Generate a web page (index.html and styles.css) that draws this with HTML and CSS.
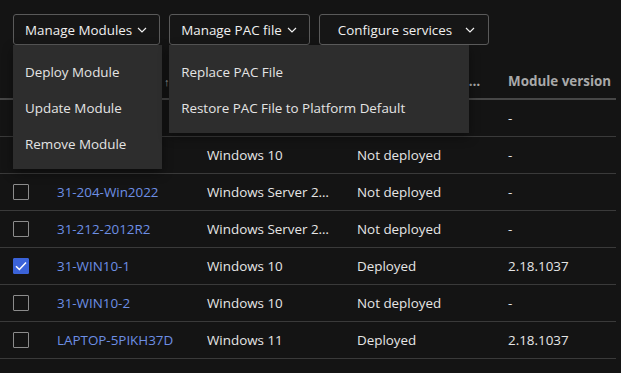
FILE: index.html
```html
<!DOCTYPE html>
<html>
<head>
  <title>Devices - Modules</title>
  <link rel="stylesheet" href="styles.css">
</head>
<body>
  <div class="toolbar">
    <div class="menu">
      <button type="button" class="menu-button">Manage Modules
        <svg class="chevron" width="10" height="6" viewBox="0 0 10 6"><path d="M1 1l4 4 4-4" fill="none" stroke="currentColor" stroke-width="1.2"/></svg>
      </button>
      <div class="dropdown dropdown-modules">
        <div class="dropdown-item">Deploy Module</div>
        <div class="dropdown-item">Update Module</div>
        <div class="dropdown-item">Remove Module</div>
      </div>
    </div>
    <div class="menu">
      <button type="button" class="menu-button">Manage PAC file
        <svg class="chevron" width="10" height="6" viewBox="0 0 10 6"><path d="M1 1l4 4 4-4" fill="none" stroke="currentColor" stroke-width="1.2"/></svg>
      </button>
      <div class="dropdown dropdown-pac">
        <div class="dropdown-item">Replace PAC File</div>
        <div class="dropdown-item">Restore PAC File to Platform Default</div>
      </div>
    </div>
    <div class="menu">
      <button type="button" class="menu-button menu-button-wide">Configure services
        <svg class="chevron" width="10" height="6" viewBox="0 0 10 6"><path d="M1 1l4 4 4-4" fill="none" stroke="currentColor" stroke-width="1.2"/></svg>
      </button>
    </div>
  </div>

  <table class="device-table">
    <colgroup>
      <col class="col-check">
      <col class="col-name">
      <col class="col-os">
      <col class="col-status">
      <col class="col-version">
    </colgroup>
    <thead>
      <tr>
        <th><span class="checkbox"></span></th>
        <th class="name-header">Computer name<span class="sort">&#8593;</span></th>
        <th>Operating system</th>
        <th>Module deployment status</th>
        <th>Module version</th>
      </tr>
    </thead>
    <tbody id="deviceRows"></tbody>
  </table>

  <script>
    // device list
    var devices = [
      { name: "31-201-Win2019", os: "Windows Server 2019", status: "Not deployed", version: "-", checked: false },
      { name: "31-202-WIN10", os: "Windows 10", status: "Not deployed", version: "-", checked: false },
      { name: "31-204-Win2022", os: "Windows Server 2022", status: "Not deployed", version: "-", checked: false },
      { name: "31-212-2012R2", os: "Windows Server 2012 R2", status: "Not deployed", version: "-", checked: false },
      { name: "31-WIN10-1", os: "Windows 10", status: "Deployed", version: "2.18.1037", checked: true },
      { name: "31-WIN10-2", os: "Windows 10", status: "Not deployed", version: "-", checked: false },
      { name: "LAPTOP-5PIKH37D", os: "Windows 11", status: "Deployed", version: "2.18.1037", checked: false }
    ];

    var body = document.getElementById("deviceRows");

    for (var i = 0; i < devices.length; i++) {
      var d = devices[i];
      var row = body.insertRow();

      var box = document.createElement("span");
      box.className = d.checked ? "checkbox checked" : "checkbox";
      if (d.checked) {
        box.innerHTML = '<svg width="12" height="10" viewBox="0 0 12 10"><path d="M1 5.2l3.4 3.3L11 1.5" fill="none" stroke="#fff" stroke-width="1.5"/></svg>';
      }
      row.insertCell().appendChild(box);

      var link = document.createElement("a");
      link.href = "#";
      link.className = "device-link";
      link.textContent = d.name;
      row.insertCell().appendChild(link);

      row.insertCell().textContent = d.os;
      row.insertCell().textContent = d.status;
      row.insertCell().textContent = d.version;
    }
  </script>
</body>
</html>
```

FILE: styles.css
```css
/* page */
body {
  font-family: "Open Sans", "Noto Sans", sans-serif;
  font-size: 13.4px;
  background-color: #141414;
  color: #e6e6e6;
  margin: 0;
  padding: 14px 5px 0 0;
  overflow: hidden;
}

/* toolbar and menus */
.toolbar {
  display: flex;
  gap: 9px;
  padding-left: 13px;
  position: relative;
  z-index: 2;
}

.menu {
  position: relative;
}

.menu-button {
  display: flex;
  align-items: center;
  gap: 5px;
  height: 31px;
  padding: 0 12px 0 11px;
  background-color: #161616;
  color: #f0f0f0;
  border: 1px solid #5a5a5a;
  border-radius: 3px;
  font-family: inherit;
  font-size: 13.4px;
  cursor: pointer;
}

.menu-button-wide {
  padding: 0 13px 0 18px;
  gap: 13px;
}

.chevron {
  margin-top: 1px;
}

.dropdown {
  position: absolute;
  top: 31px;
  left: 0;
  background-color: #2d2d2d;
  padding: 9px 0 7px;
  box-shadow: 0 4px 10px rgba(0, 0, 0, 0.4);
}

.dropdown-modules {
  width: 149px;
}

.dropdown-pac {
  width: 300px;
}

.dropdown-item {
  height: 36px;
  line-height: 36px;
  padding: 0 12px;
  color: #e4e4e4;
  white-space: nowrap;
}

/* table */
.device-table {
  width: 616px;
  margin-top: 18px;
  border-collapse: collapse;
  table-layout: fixed;
}

.col-check { width: 45px; }
.col-name { width: 150px; }
.col-os { width: 150px; }
.col-status { width: 151px; }
.col-version { width: 120px; }

th, td {
  height: 36px;
  padding: 0 12px;
  text-align: left;
  white-space: nowrap;
  overflow: hidden;
  text-overflow: ellipsis;
}

th:nth-child(3), td:nth-child(3) {
  padding-right: 15px;
}

th:last-child, td:last-child {
  padding-right: 0;
}

th {
  font-weight: bold;
  color: #a9a9a9;
  border-bottom: 2px solid #474747;
  height: 35px;
}

td {
  border-bottom: 1px solid #3a3a3a;
}

th:first-child, td:first-child {
  padding-left: 13px;
}

.name-header {
  letter-spacing: -0.35px;
}

.sort {
  font-weight: normal;
  font-size: 11px;
  margin-left: 3px;
}

.checkbox {
  display: flex;
  align-items: center;
  justify-content: center;
  width: 14px;
  height: 14px;
  border: 1px solid #8c8c8c;
  border-radius: 1px;
}

.checkbox.checked {
  background-color: #3b63d9;
  border-color: #3b63d9;
}

.device-link {
  color: #6d8fe4;
  text-decoration: none;
}
```
